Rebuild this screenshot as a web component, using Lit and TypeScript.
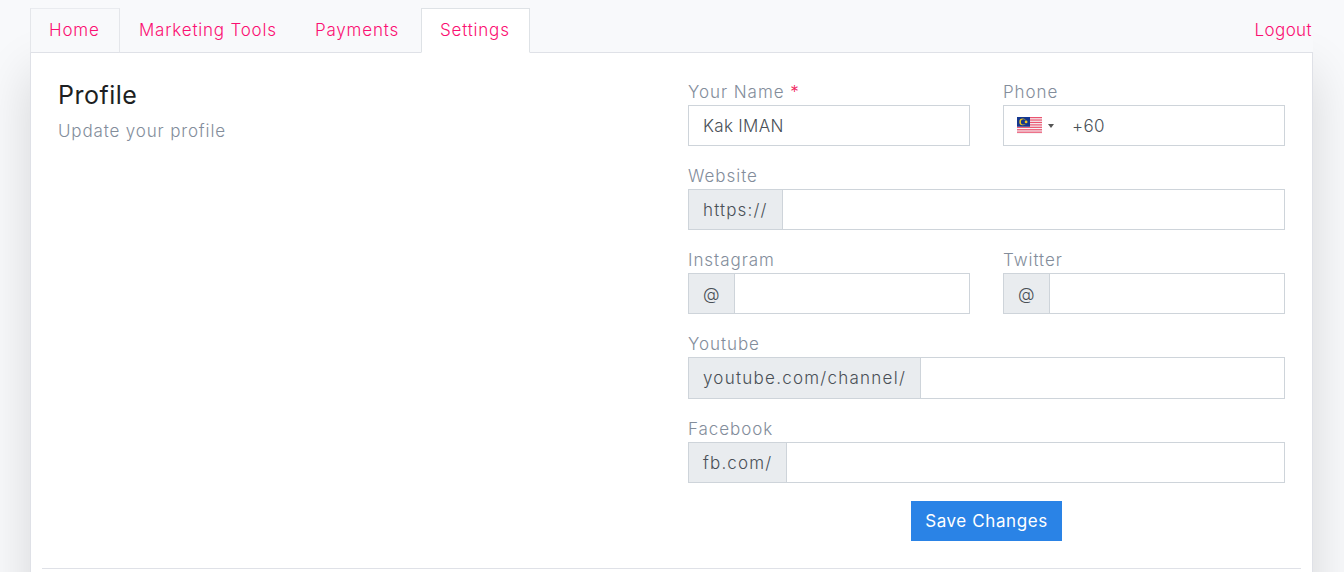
import { LitElement, html, svg, css } from "lit";
import { customElement } from "lit/decorators.js";

@customElement("app-root")
export class AppRoot extends LitElement {
  static styles = css`
    :host { display: block; height: 572px; overflow: hidden; background: #f8f9fb; font-family: "Inter", "Liberation Sans", sans-serif; font-size: 17px; font-weight: 350; color: #4a5058; }
    .page { padding: 8px 31px 0 30px; }
    .tabs { display: flex; height: 44px; position: relative; z-index: 1; background: #f8f9fb; }
    .tab { box-sizing: border-box; height: 45px; padding: 0 0 2px 18px; display: flex; align-items: center; color: #fb0f72; border: 1px solid transparent; letter-spacing: 0.8px; white-space: nowrap; }
    .tab.home { border-color: #e9ebef #e4e6ea #dfe1e7 #e4e6ea; width: 90px; }
    .tab.mt { width: 176px; }
    .tab.pay { width: 125px; }
    .tab.active { width: 109px; background: #fff; border-color: #dee2e6; border-bottom-color: #fff; }
    .tab.logout { margin-left: auto; padding: 0 0 2px 0; letter-spacing: 0.4px; }
    .card { box-sizing: border-box; height: 560px; background: #fff; border: 1px solid #dfe1e7; box-shadow: 0 20px 48px rgba(0,0,0,.14); padding: 0 11px; }
    .main { display: grid; grid-template-columns: 1fr 597px; padding: 0 16px 0 16px; height: 515px; }
    .intro { padding-top: 24px; }
    h1 { margin: 0; font-size: 25px; line-height: 36px; font-weight: 400; color: #1d1f23; letter-spacing: 0.5px; }
    .sub { margin-top: 6px; line-height: 24px; color: #838d9b; letter-spacing: 0.85px; }
    .form { padding-top: 27px; display: flex; flex-direction: column; gap: 18px; }
    .row { display: grid; grid-template-columns: 282px 282px; column-gap: 33px; }
    .label { display: block; height: 25px; line-height: 24px; color: #838d9b; letter-spacing: 0.95px; white-space: nowrap; }
    .req { color: #f0245e; }
    .box { box-sizing: border-box; height: 41px; display: flex; align-items: stretch; border: 1px solid #ced4da; background: #fff; }
    .box.tall { height: 42px; }
    .pre { display: flex; align-items: center; padding: 0 14px; background: #e9ecef; border-right: 1px solid #ced4da; color: #495057; letter-spacing: 1.15px; white-space: nowrap; }
    .pre.at { letter-spacing: 0; }
    .pre.long { letter-spacing: 1.25px; }
    .val { display: flex; align-items: center; padding: 0 14px; color: #495057; letter-spacing: 0.3px; }
    .flag { display: block; margin-left: 13px; align-self: center; }
    .caret { width: 0; height: 0; align-self: center; margin-left: 6px; border-left: 3.5px solid transparent; border-right: 3.5px solid transparent; border-top: 4px solid #555; }
    .phone { padding: 0 0 0 18px; }
    .save { align-self: center; box-sizing: border-box; width: 151px; height: 40px; border: 0; background: #2a83e6; color: #fff; font: inherit; font-weight: 400; letter-spacing: 0.6px; }
    .rule { height: 1px; background: #dfe1e7; }
  `;

  private field(label: string, prefix: string, tall = false) {
    const cls = prefix === "@" ? "at" : tall ? "long" : "";
    return html`<div>
      <span class="label">${label}</span>
      <div class="box ${tall ? "tall" : ""}"><span class="pre ${cls}">${prefix}</span></div>
    </div>`;
  }

  private flag() {
    const stripes = [];
    for (let i = 0; i < 7; i++) {
      stripes.push(svg`<rect x="0" y=${i * 2.43} width="25" height="1.22" fill="#ea5470"></rect>`);
    }
    return html`<svg class="flag" width="25" height="17" viewBox="0 0 25 17">
      <rect width="25" height="17" fill="#f6f2f4"></rect>
      ${stripes}
      <rect width="13" height="9.7" fill="#14378f"></rect>
      <circle cx="5.6" cy="4.9" r="3.3" fill="#f2c81e"></circle>
      <circle cx="6.6" cy="4.9" r="2.7" fill="#14378f"></circle>
      <circle cx="9.1" cy="4.9" r="1.4" fill="#f2c81e"></circle>
    </svg>`;
  }

  render() {
    return html`<div class="page">
      <nav class="tabs">
        <div class="tab home">Home</div>
        <div class="tab mt">Marketing Tools</div>
        <div class="tab pay">Payments</div>
        <div class="tab active">Settings</div>
        <div class="tab logout">Logout</div>
      </nav>
      <section class="card">
        <div class="main">
          <div class="intro">
            <h1>Profile</h1>
            <div class="sub">Update your profile</div>
          </div>
          <div class="form">
            <div class="row">
              <div>
                <span class="label">Your Name <span class="req">*</span></span>
                <div class="box"><span class="val">Kak IMAN</span></div>
              </div>
              <div>
                <span class="label">Phone</span>
                <div class="box">${this.flag()}<span class="caret"></span><span class="val phone">+60</span></div>
              </div>
            </div>
            ${this.field("Website", "https://")}
            <div class="row">
              ${this.field("Instagram", "@")}
              ${this.field("Twitter", "@")}
            </div>
            ${this.field("Youtube", "youtube.com/channel/", true)}
            ${this.field("Facebook", "fb.com/")}
            <button class="save">Save Changes</button>
          </div>
        </div>
        <div class="rule"></div>
      </section>
    </div>`;
  }
}
